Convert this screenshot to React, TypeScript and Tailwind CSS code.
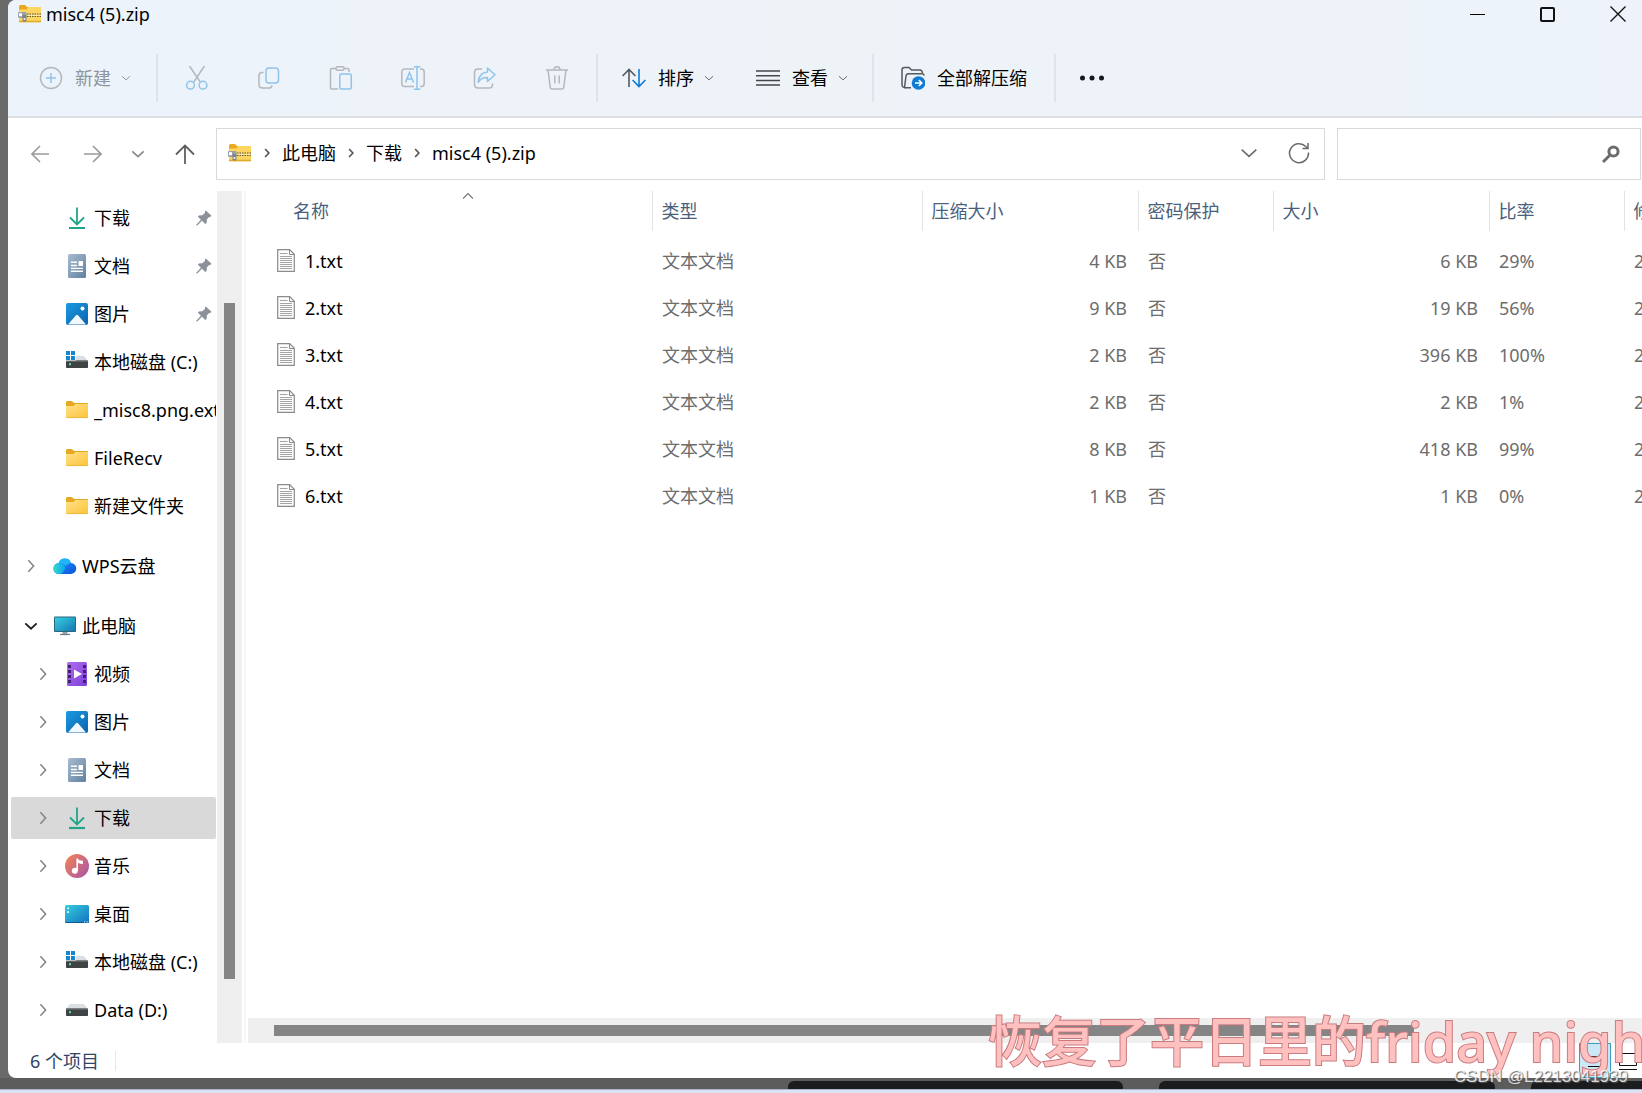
import type { ReactNode } from "react";

const FONT = "font-['Noto_Sans','Noto_Sans_CJK_SC',sans-serif]";

function ZipIcon() {
  return (
    <svg width="24" height="20" viewBox="0 0 24 20" aria-hidden="true">
      <path d="M1 2.500Q1 1 2.500 1H7l2 2h13.500v4H1z" fill="#e9a820" />
      <path d="M1 5.500h7.500L10 3h12.500q.5 0 .5.500V17.500q0 .8-.8.800H1.800Q1 18.300 1 17.500z" fill="#fdd561" />
      <path d="M1 16.800h22v.9q0 .6-.8.600H1.800Q1 18.300 1 17.700z" fill="#e3a92b" />
      <path d="M9 10.200h14M9 12.400h14" stroke="#6b5a2a" strokeWidth="1.200" strokeDasharray="1.500 1" />
      <path d="M9 11.300h14" stroke="#fff3c4" strokeWidth="1" />
      <rect x="0" y="8" width="8.500" height="6" rx="1" fill="#9aa0a8" />
      <rect x="1" y="9.200" width="3" height="3" fill="#fff" />
      <rect x="4.500" y="11" width="4" height="6.500" rx="1" fill="#7c828b" />
      <rect x="5.600" y="14" width="1.800" height="2" fill="#e8eaee" />
    </svg>
  );
}

function DownloadIcon() {
  return (
    <svg width="24" height="24" viewBox="0 0 24 24" fill="none" stroke="#1fa588" aria-hidden="true">
      <path d="M12 1.500v16M5 11.500l7 7 7-7" strokeWidth="1.800" />
      <path d="M4 22h16" strokeWidth="2.200" />
    </svg>
  );
}

function DocIcon() {
  return (
    <svg width="24" height="24" viewBox="0 0 24 24" aria-hidden="true">
      <defs>
        <linearGradient id="doc" x1="0" y1="0" x2="1" y2="1">
          <stop offset="0" stopColor="#a9bcd2" />
          <stop offset="1" stopColor="#617f9f" />
        </linearGradient>
      </defs>
      <rect x="3" y="0" width="18" height="24" rx="1.500" fill="url(#doc)" />
      <path d="M6 8.300h6M6 11.500h6M6 14.400h12M6 17.200h12" stroke="#fff" strokeWidth="1.400" />
      <rect x="13.500" y="7" width="4.500" height="5" fill="#fff" />
    </svg>
  );
}

function PictureIcon() {
  return (
    <svg width="24" height="24" viewBox="0 0 24 24" aria-hidden="true">
      <defs>
        <linearGradient id="pic" x1="0" y1="0" x2="1" y2="1">
          <stop offset="0" stopColor="#1b9be3" />
          <stop offset="1" stopColor="#0b62ad" />
        </linearGradient>
      </defs>
      <rect x="1" y="1" width="22" height="22" rx="2" fill="url(#pic)" />
      <path d="M3 22.500l8-9.300q1-1 2 0l8 9.300z" fill="#f4f9fe" />
      <circle cx="17.500" cy="6.500" r="2" fill="#fff" />
    </svg>
  );
}

function DriveIcon({ windows }: { windows?: boolean }) {
  return (
    <svg width="24" height="24" viewBox="0 0 24 24" aria-hidden="true">
      <path d="M5 6h14l4 5H1z" fill="#dcdfe2" />
      <rect x="1" y="10.500" width="22" height="7.500" rx=".8" fill="#3f4345" />
      <rect x="1" y="10.500" width="22" height="1.200" fill="#6a6e70" />
      <rect x="4" y="13.200" width="2" height="2" fill="#5fe08a" />
      {windows && (
        <g>
          <path d="M0 0h11v10.500H0z" fill="#fff" />
          <path d="M1 1h4v4H1zM6 1h4v4H6zM1 6h4v4H1zM6 6h4v4H6z" fill="#1486cf" />
        </g>
      )}
    </svg>
  );
}

function FolderIcon() {
  return (
    <svg width="24" height="20" viewBox="0 0 24 20" aria-hidden="true">
      <defs>
        <linearGradient id="fold" x1="0" y1="0" x2="1" y2="1">
          <stop offset="0" stopColor="#ffe08a" />
          <stop offset="1" stopColor="#fcc538" />
        </linearGradient>
      </defs>
      <path d="M1 2.500Q1 1 2.500 1H7l2 2h13q1 0 1 1v3H1z" fill="#e6a823" />
      <path d="M1 6h7.500L10.500 4H22.500q.5 0 .5.500V17q0 1-1 1H2q-1 0-1-1z" fill="url(#fold)" />
      <path d="M1.200 17.600h21.600" stroke="#e9b23a" strokeWidth=".8" />
    </svg>
  );
}

function CloudIcon() {
  return (
    <svg width="24" height="24" viewBox="0 0 24 24" aria-hidden="true">
      <defs>
        <linearGradient id="cl" x1="0" y1="0" x2="1" y2="0">
          <stop offset="0" stopColor="#2fdcc9" />
          <stop offset="1" stopColor="#0fa0f5" />
        </linearGradient>
        <linearGradient id="cr" x1="0" y1="0" x2="1" y2="1">
          <stop offset="0" stopColor="#23a4ff" />
          <stop offset="1" stopColor="#0a4fd8" />
        </linearGradient>
      </defs>
      <path d="M6 20a5.500 5.500 0 0 1-.3-11A6.500 6.500 0 0 1 18 9a5.500 5.500 0 0 1-.5 11z" fill="url(#cr)" />
      <path d="M6.200 20a5.500 5.500 0 0 1 0-11q3 0 5 2.500 2 2.500 0 5Q9.200 20 6.200 20z" fill="url(#cl)" />
      <path d="M5.700 9A6.500 6.500 0 0 1 18 9q-3 .3-5.500 3Q9.500 8.800 5.700 9z" fill="#1fb6f7" />
    </svg>
  );
}

function MonitorIcon() {
  return (
    <svg width="24" height="24" viewBox="0 0 24 24" aria-hidden="true">
      <defs>
        <linearGradient id="mon" x1="0" y1="0" x2="1" y2="1">
          <stop offset="0" stopColor="#35cfe0" />
          <stop offset="1" stopColor="#1778b4" />
        </linearGradient>
      </defs>
      <rect x="9.500" y="17" width="5" height="3.500" fill="#9aa4ac" />
      <path d="M7 20.500h10" stroke="#6e7a83" strokeWidth="1.200" />
      <rect x="1" y="2.500" width="22" height="15.500" rx="1" fill="#2a6680" />
      <rect x="2" y="3.500" width="20" height="13.500" fill="url(#mon)" />
    </svg>
  );
}

function VideoIcon() {
  return (
    <svg width="24" height="24" viewBox="0 0 24 24" aria-hidden="true">
      <defs>
        <linearGradient id="vid" x1="0" y1="0" x2="1" y2="1">
          <stop offset="0" stopColor="#b06cf0" />
          <stop offset="1" stopColor="#7d3fd8" />
        </linearGradient>
      </defs>
      <rect x="2" y="0" width="20" height="24" rx="1.500" fill="url(#vid)" />
      <path
        d="M3 3h3v3H3zM3 8h3v3H3zM3 13h3v3H3zM3 18h3v3H3zM18 3h3v3h-3zM18 8h3v3h-3zM18 13h3v3h-3zM18 18h3v3h-3z"
        fill="#41206f"
      />
      <path d="M9 7.500l8 4.500-8 4.500z" fill="#fff" />
    </svg>
  );
}

function MusicIcon() {
  return (
    <svg width="24" height="24" viewBox="0 0 24 24" aria-hidden="true">
      <defs>
        <linearGradient id="mus" x1="0" y1="0.200" x2="1" y2="1">
          <stop offset="0" stopColor="#ee8258" />
          <stop offset="1" stopColor="#a552ab" />
        </linearGradient>
      </defs>
      <circle cx="12" cy="12" r="12" fill="url(#mus)" />
      <circle cx="9.800" cy="16.800" r="3" fill="#fff" />
      <path d="M11.400 16.800V4.500h1.500q.5 2.200 5 2.300v3.200q-3 0-4.900-1.200v8z" fill="#fff" />
    </svg>
  );
}

function DesktopIcon() {
  return (
    <svg width="24" height="24" viewBox="0 0 24 24" aria-hidden="true">
      <defs>
        <linearGradient id="desk" x1="0" y1="0" x2="1" y2="1">
          <stop offset="0" stopColor="#35cde0" />
          <stop offset="1" stopColor="#1273bf" />
        </linearGradient>
      </defs>
      <rect x="0" y="3" width="24" height="18" rx="1.500" fill="url(#desk)" />
      <path d="M0 20h24v.3q0 .7-1.500.700h-21Q0 21 0 20.300z" fill="#0c5a92" />
      <path d="M2.200 5.500h1.800v1.800H2.200zM2.200 9.200h1.800V11H2.200zM19 19.500h1.200v1H19zM21.500 19.500h1.200v1h-1.200z" fill="#e9fbff" />
    </svg>
  );
}

function TextFileIcon() {
  return (
    <svg width="18" height="23" viewBox="0 0 18 23" aria-hidden="true">
      <path d="M.7.700h12l4.600 4.600v17H.7z" fill="#fcfcfc" stroke="#8b8b8b" strokeWidth="1.200" />
      <path d="M12.500.700v4.800h4.800" fill="none" stroke="#8b8b8b" />
      <path
        d="M3 4.500h7.500M3 7.500h12M3 9.500h12M3 11.500h12M3 13.500h12M3 15.500h12M3 17.500h12M3 19.500h12"
        stroke="#a4a4a4"
        strokeWidth="1"
      />
    </svg>
  );
}

function PinIcon() {
  return (
    <svg width="16" height="16" viewBox="0 0 16 16" fill="#8a9198" aria-hidden="true">
      <path d="M9.800.5l5.700 5.200-.8 1.100-1.500.1-2.400 2.700-.1 3.300-1.300 1L6 10.800 1.200 15.600.3 15.500.4 14.600 5 9.800 1.900 6.700l1-1.300 3.400-.1L8.900 2.900 9 1.300z" />
    </svg>
  );
}

function Chevron({ dir, size, color, width = 1.5 }: { dir: "right" | "down" | "up"; size: number; color: string; width?: number }) {
  const d = dir === "right" ? "M5 1.500l6 6.500-6 6.500" : dir === "down" ? "M1.500 5l6.500 6 6.500-6" : "M1.500 10L8 3.500l6.500 6.500";
  return (
    <svg width={size} height={size} viewBox="0 0 16 16" fill="none" stroke={color} strokeWidth={width} aria-hidden="true">
      <path d={d} />
    </svg>
  );
}

const GREY = "#b4b8be";
const BLUE = "#8fc4ea";

function Stroke({ children }: { children: ReactNode }) {
  return (
    <svg width="24" height="24" viewBox="0 0 24 24" fill="none" strokeWidth="1.500" aria-hidden="true">
      {children}
    </svg>
  );
}

const disabledTools: { label: string; icon: ReactNode }[] = [
  {
    label: "剪切",
    icon: (
      <Stroke>
        <path d="M4.500 0l10.800 16M19.500 0L8.700 16" stroke={GREY} />
        <circle cx="5.500" cy="19.200" r="3.900" stroke={BLUE} />
        <circle cx="18" cy="19.200" r="3.900" stroke={BLUE} />
      </Stroke>
    ),
  },
  {
    label: "复制",
    icon: (
      <Stroke>
        <path d="M6.500 6.500H5Q2 6.500 2 9.500v9q0 3.500 3.500 3.500H12q2.500 0 3-2.500" stroke={GREY} />
        <rect x="9" y="2" width="12.500" height="15" rx="3" stroke={BLUE} />
      </Stroke>
    ),
  },
  {
    label: "粘贴",
    icon: (
      <Stroke>
        <path d="M7 2.500H3q-1.500 0-1.500 1.500v18q0 1 1 1H9M15 2.500h3.500Q20 2.500 20 4v2" stroke={GREY} />
        <rect x="7" y=".8" width="8" height="3.400" rx="1.500" stroke={GREY} />
        <rect x="10.800" y="8" width="11.500" height="15" rx="1.500" stroke={BLUE} />
      </Stroke>
    ),
  },
  {
    label: "重命名",
    icon: (
      <Stroke>
        <path d="M13 3H4Q.8 3 .8 6v11.500q0 3 3 3H13M19 3h1.200q3 0 3 3v11.500q0 3-3 3H19" stroke={GREY} />
        <path d="M16 .8v22.400M12.800.8h6.500M12.800 23.200h6.500M4.500 16.500L8.500 6.500l4 10M5.800 13h5.400" stroke={BLUE} />
      </Stroke>
    ),
  },
  {
    label: "共享",
    icon: (
      <Stroke>
        <path d="M9 3H5Q1.500 3 1.500 6.500v12q0 3.500 3.500 3.500h11q3.500 0 3.500-3.500v-1" stroke={GREY} />
        <path d="M14.500 2L22 8.800l-7.500 6.700v-4q-6-.3-9.300 4.800Q6 6.500 14.500 6z" stroke={BLUE} strokeLinejoin="round" />
      </Stroke>
    ),
  },
  {
    label: "删除",
    icon: (
      <Stroke>
        <path
          d="M1 4h22M3 4l2.200 17q.2 2 2 2h9.600q1.800 0 2-2L21 4M9 4q0-3.200 3-3.200T15 4M9.800 9.500v8M14.200 9.500v8"
          stroke={GREY}
        />
      </Stroke>
    ),
  },
];

type NavItem = { label: string; icon: ReactNode; level: 0 | 1; state?: "closed" | "open"; pinned?: boolean; gap?: boolean; selected?: boolean };

const nav: NavItem[] = [
  { label: "下载", icon: <DownloadIcon />, level: 1, pinned: true },
  { label: "文档", icon: <DocIcon />, level: 1, pinned: true },
  { label: "图片", icon: <PictureIcon />, level: 1, pinned: true },
  { label: "本地磁盘 (C:)", icon: <DriveIcon windows />, level: 1 },
  { label: "_misc8.png.extracted", icon: <FolderIcon />, level: 1 },
  { label: "FileRecv", icon: <FolderIcon />, level: 1 },
  { label: "新建文件夹", icon: <FolderIcon />, level: 1 },
  { label: "WPS云盘", icon: <CloudIcon />, level: 0, state: "closed", gap: true },
  { label: "此电脑", icon: <MonitorIcon />, level: 0, state: "open", gap: true },
  { label: "视频", icon: <VideoIcon />, level: 1, state: "closed" },
  { label: "图片", icon: <PictureIcon />, level: 1, state: "closed" },
  { label: "文档", icon: <DocIcon />, level: 1, state: "closed" },
  { label: "下载", icon: <DownloadIcon />, level: 1, state: "closed", selected: true },
  { label: "音乐", icon: <MusicIcon />, level: 1, state: "closed" },
  { label: "桌面", icon: <DesktopIcon />, level: 1, state: "closed" },
  { label: "本地磁盘 (C:)", icon: <DriveIcon windows />, level: 1, state: "closed" },
  { label: "Data (D:)", icon: <DriveIcon />, level: 1, state: "closed" },
];

const files = [
  { name: "1.txt", packed: "4 KB", size: "6 KB", ratio: "29%" },
  { name: "2.txt", packed: "9 KB", size: "19 KB", ratio: "56%" },
  { name: "3.txt", packed: "2 KB", size: "396 KB", ratio: "100%" },
  { name: "4.txt", packed: "2 KB", size: "2 KB", ratio: "1%" },
  { name: "5.txt", packed: "8 KB", size: "418 KB", ratio: "99%" },
  { name: "6.txt", packed: "1 KB", size: "1 KB", ratio: "0%" },
];

function Divider() {
  return <span className="h-12 w-0.5 shrink-0 bg-[#dfe3ea]" />;
}

function TitleBar() {
  return (
    <div className="flex h-7 items-center pl-2.5">
      <ZipIcon />
      <h1 className="ml-1 flex-1 text-lg leading-7">misc4 (5).zip</h1>
      <button type="button" aria-label="最小化" className="flex h-7 w-[70px] items-center justify-center">
        <span className="h-px w-[15px] bg-black" />
      </button>
      <button type="button" aria-label="最大化" className="flex h-7 w-[70px] items-center justify-center">
        <span className="size-[15px] rounded-xs border-2 border-[#111]" />
      </button>
      <button type="button" aria-label="关闭" className="ml-3 flex h-7 w-12 items-center justify-center">
        <svg width="16" height="16" viewBox="0 0 16 16" stroke="#111" strokeWidth="1.400" aria-hidden="true">
          <path d="M.5.500l15 15M15.500.500l-15 15" />
        </svg>
      </button>
    </div>
  );
}

function Toolbar() {
  return (
    <div className="flex h-[88px] items-center pt-3 pl-[31px] text-lg">
      <button type="button" disabled className="flex shrink-0 items-center text-[#8f949b]">
        <svg width="24" height="24" viewBox="0 0 24 24" fill="none" strokeWidth="1.500" aria-hidden="true">
          <circle cx="12" cy="12" r="10.500" stroke={GREY} />
          <path d="M12 7v10M7 12h10" stroke={BLUE} />
        </svg>
        <span className="mr-2.5 ml-3">新建</span>
        <Chevron dir="down" size={10} color="#8f949b" />
      </button>
      <span className="w-[25px] shrink-0" />
      <Divider />
      <div className="flex shrink-0 items-center gap-12 px-[27px]">
        {disabledTools.map((t) => (
          <button key={t.label} type="button" disabled aria-label={t.label}>
            {t.icon}
          </button>
        ))}
      </div>
      <Divider />
      <button type="button" className="ml-6 flex shrink-0 items-center">
        <svg width="24" height="20" viewBox="0 0 24 20" fill="none" strokeWidth="1.600" aria-hidden="true">
          <path d="M7 19V1.500M.6 8L7 1.500 13.400 8" stroke="#55595e" />
          <path d="M17 1v17.500M10.600 12l6.400 6.500 6.400-6.500" stroke="#0f7bd6" />
        </svg>
        <span className="mr-2.5 ml-3">排序</span>
        <Chevron dir="down" size={10} color="#60656b" />
      </button>
      <button type="button" className="ml-[42px] flex shrink-0 items-center">
        <svg width="24" height="20" viewBox="0 0 24 20" stroke="#44484d" strokeWidth="1.500" aria-hidden="true">
          <path d="M0 3h24M0 7.700h24M0 12.400h24M0 17.100h24" />
        </svg>
        <span className="mr-2.5 ml-3">查看</span>
        <Chevron dir="down" size={10} color="#60656b" />
      </button>
      <span className="w-6 shrink-0" />
      <Divider />
      <button type="button" className="ml-[27px] flex shrink-0 items-center">
        <svg width="24" height="24" viewBox="0 0 24 24" fill="none" stroke="#55595e" strokeWidth="1.500" aria-hidden="true">
          <path d="M3 21.500Q1 21 1 19V4q0-2.500 2.500-2.500H8L10.500 4H19q2 0 2.500 3M3.500 21.500L5 10q.3-2.300 2.500-2.300H21q1.800 0 2.300 1.800M3 21.800h7" />
          <circle cx="17.500" cy="17" r="6.800" fill="#0f7bd6" stroke="none" />
          <path d="M14 17h6.500M17.800 14l3 3-3 3" stroke="#fff" strokeWidth="1.600" />
        </svg>
        <span className="ml-3">全部解压缩</span>
      </button>
      <span className="w-[27px] shrink-0" />
      <Divider />
      <button type="button" aria-label="更多" className="ml-6">
        <svg width="24" height="6" viewBox="0 0 24 6" fill="#15181b" aria-hidden="true">
          <circle cx="2.500" cy="3" r="2.500" />
          <circle cx="12" cy="3" r="2.500" />
          <circle cx="21.500" cy="3" r="2.500" />
        </svg>
      </button>
    </div>
  );
}

function AddressRow() {
  const crumbs = ["此电脑", "下载", "misc4 (5).zip"];
  return (
    <div className="flex items-center px-px pt-2.5 pb-[11px] pl-5">
      <div className="flex w-[188px] shrink-0 items-center">
        <button type="button" aria-label="后退" className="mr-8 ml-[3px]">
          <svg width="18" height="18" viewBox="0 0 18 18" fill="none" stroke="#9a9a9a" strokeWidth="1.600" aria-hidden="true">
            <path d="M18 9H1M9 1L1 9l8 8" />
          </svg>
        </button>
        <button type="button" aria-label="前进" className="ml-[3px]">
          <svg width="18" height="18" viewBox="0 0 18 18" fill="none" stroke="#9a9a9a" strokeWidth="1.600" aria-hidden="true">
            <path d="M0 9h17M9 1l8 8-8 8" />
          </svg>
        </button>
        <button type="button" aria-label="最近的位置" className="ml-[29px]">
          <Chevron dir="down" size={14} color="#8a8a8a" width={2} />
        </button>
        <button type="button" aria-label="上移" className="ml-[30px]">
          <svg width="20" height="20" viewBox="0 0 20 20" fill="none" stroke="#5f5f5f" strokeWidth="1.800" aria-hidden="true">
            <path d="M10 20V1.500M1 10.500l9-9 9 9" />
          </svg>
        </button>
      </div>
      <div className="flex h-[52px] flex-1 items-center border border-[#d9d9d9] pr-3.5 pb-0.5 pl-[11px] text-lg">
        <ZipIcon />
        <nav aria-label="地址" className="flex flex-1 items-center">
          {crumbs.map((c) => (
            <span key={c} className="flex items-center">
              <span className="mx-2.5">
                <Chevron dir="right" size={10} color="#555" width={2.6} />
              </span>
              <a href="#path">{c}</a>
            </span>
          ))}
        </nav>
        <button type="button" aria-label="历史记录" className="mr-[30px]">
          <Chevron dir="down" size={18} color="#6a6a6a" width={1.4} />
        </button>
        <button type="button" aria-label="刷新">
          <svg width="22" height="22" viewBox="0 0 22 22" fill="none" stroke="#6a6a6a" strokeWidth="1.500" aria-hidden="true">
            <path d="M20.500 10.500A9.500 9.500 0 1 1 17.800 4.500l1.800 1.700M20 1v5.500h-5.500" />
          </svg>
        </button>
      </div>
      <label className="ml-3 flex h-[52px] w-[304px] items-center border border-[#d9d9d9] pr-5">
        <input type="text" aria-label="搜索" className="min-w-0 flex-1 bg-transparent px-3 text-lg outline-none" />
        <svg width="18" height="18" viewBox="0 0 18 18" fill="none" stroke="#6c6c6c" aria-hidden="true">
          <circle cx="11.500" cy="6.500" r="4.600" strokeWidth="3" />
          <path d="M8 10l-7 7" strokeWidth="3" />
        </svg>
      </label>
    </div>
  );
}

function Sidebar() {
  return (
    <aside className="flex w-[234px] shrink-0">
      <nav aria-label="导航窗格" className="w-[209px] overflow-hidden pt-[3px]">
        {nav.map((item, i) => (
          <div key={i} className={item.gap ? "flex h-[60px] items-center pt-3 pl-[3px]" : "flex h-12 items-center pl-[3px]"}>
            <button
              type="button"
              className={
                "flex h-[42px] w-[205px] items-center rounded-xs text-left " +
                (item.level === 1 ? "pl-[25px]" : "pl-[13px]") +
                (item.selected ? " bg-[#d9d9d9]" : "")
              }
            >
              <span className="mr-[17px] w-3 shrink-0">
                {item.state === "closed" && <Chevron dir="right" size={14} color="#868686" width={1.8} />}
                {item.state === "open" && <Chevron dir="down" size={14} color="#222" width={2.2} />}
              </span>
              <span className="mr-[5px] shrink-0">{item.icon}</span>
              <span className="flex-1 overflow-hidden text-lg whitespace-nowrap">{item.label}</span>
              {item.pinned && (
                <span className="mr-1 shrink-0">
                  <PinIcon />
                </span>
              )}
            </button>
          </div>
        ))}
      </nav>
      <div className="w-[25px] bg-[#efefef] pt-28">
        <div className="mx-auto h-[676px] w-[11px] bg-[#858585]" />
      </div>
    </aside>
  );
}

const th = "border-r border-[#e3e3e3] px-0 text-left font-normal";

function FileTable() {
  return (
    <table className="w-[1485px] table-fixed border-collapse text-lg">
      <colgroup>
        <col className="w-[404px]" />
        <col className="w-[270px]" />
        <col className="w-[216px]" />
        <col className="w-[135px]" />
        <col className="w-[216px]" />
        <col className="w-[135px]" />
        <col />
      </colgroup>
      <thead>
        <tr className="h-10 text-[#4a5f7c]">
          <th className={th + " relative"}>
            <span className="pl-[45px]">名称</span>
            <span className="absolute top-0 left-[214px]">
              <Chevron dir="up" size={12} color="#777" />
            </span>
          </th>
          <th className={th}>
            <span className="pl-[9px]">类型</span>
          </th>
          <th className={th}>
            <span className="pl-[9px]">压缩大小</span>
          </th>
          <th className={th}>
            <span className="pl-[9px]">密码保护</span>
          </th>
          <th className={th}>
            <span className="pl-[9px]">大小</span>
          </th>
          <th className={th}>
            <span className="pl-[9px]">比率</span>
          </th>
          <th className="text-left font-normal">
            <span className="pl-[9px]">修改日期</span>
          </th>
        </tr>
      </thead>
      <tbody className="text-[#6d6d6d]">
        <tr className="h-1.5" />
        {files.map((f) => (
          <tr key={f.name} className="h-[47px]">
            <td>
              <span className="flex items-center gap-2.5 pl-[29px] text-black">
                <TextFileIcon />
                {f.name}
              </span>
            </td>
            <td className="pl-2.5">文本文档</td>
            <td className="pr-[11px] text-right">{f.packed}</td>
            <td className="pl-2.5">否</td>
            <td className="pr-[11px] text-right">{f.size}</td>
            <td className="pl-2.5">{f.ratio}</td>
            <td className="pl-2.5">2021/</td>
          </tr>
        ))}
      </tbody>
    </table>
  );
}

function StatusBar() {
  return (
    <footer className="flex h-[35px] items-center pl-[22px] text-lg text-[#2f4566]">
      <span>6 个项目</span>
      <span className="ml-4 h-5 w-px bg-[#e6e6e6]" />
      <span className="flex-1" />
      <button
        type="button"
        aria-label="详细信息"
        className="flex h-[35px] w-8 items-center justify-center border border-[#3a9cc4] bg-[#cbe8f6]"
      >
        <svg width="16" height="14" viewBox="0 0 16 14" stroke="#111" aria-hidden="true">
          <path d="M1 2.500h14M1 12.500h14" />
        </svg>
      </button>
      <button type="button" aria-label="大图标" className="mr-1 ml-2">
        <svg width="19" height="20" viewBox="0 0 19 20" fill="none" stroke="#111" aria-hidden="true">
          <path d="M.5 2.500h17v12H.5zM0 18.500h18" />
        </svg>
      </button>
    </footer>
  );
}

export default function App() {
  return (
    <div className={"relative flex min-h-screen flex-col overflow-hidden bg-[#6a6a6a] text-black " + FONT}>
      <main className="ml-2 flex flex-1 flex-col overflow-hidden rounded-l-lg bg-white">
        <header className="border-b-2 border-[#dddfe5] bg-linear-to-r from-[#edf3fb] via-[#edf3f7] to-[#eef3fb]">
          <TitleBar />
          <Toolbar />
        </header>
        <AddressRow />
        <div className="flex flex-1">
          <Sidebar />
          <div className="mr-0.5 ml-0.5 w-0.5 bg-[#f7f7f7]" />
          <section className="flex min-w-0 flex-1 flex-col overflow-hidden">
            <div className="flex-1">
              <FileTable />
            </div>
            <div className="flex h-[25px] shrink-0 items-center bg-[#efefef] pl-[26px]">
              <div className="h-[11px] w-5/6 bg-[#858585]" />
            </div>
          </section>
        </div>
        <StatusBar />
      </main>
      <div className="flex h-[11px] items-end justify-end gap-9 bg-[#5c5c5c]">
        <span className="h-2 w-[335px] rounded-t-md bg-[#1b1c1e]" />
        <span className="h-2 w-[336px] rounded-t-md bg-[#1b1c1e]" />
        <span className="h-2 w-[111px] rounded-tl-md bg-[#1b1c1e]" />
      </div>
      <div className="h-1 border-t border-[#aab3c8] bg-[#dbe2f3]" />
      <p className="absolute bottom-3 left-[988px] text-[54px] leading-[80px] font-medium whitespace-nowrap text-[#ffc0c0] [-webkit-text-stroke:2px_#c97b7f] [paint-order:stroke_fill]">
        恢复了平日里的friday night
      </p>
      <p className="absolute right-3.5 bottom-1 font-['Liberation_Sans',sans-serif] text-[17px] leading-6 text-white/80 [text-shadow:1px_1px_1px_#555]">
        CSDN @L2213041939
      </p>
    </div>
  );
}
